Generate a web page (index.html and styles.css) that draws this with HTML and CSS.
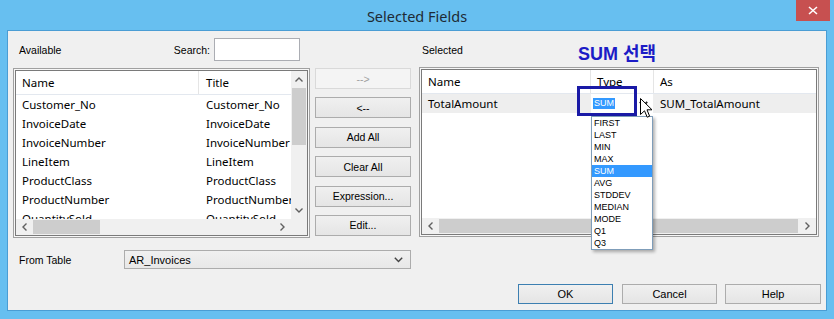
FILE: index.html
```html
<!DOCTYPE html>
<html>
<head>
<meta charset="utf-8">
<link rel="stylesheet" href="styles.css">
</head>
<body>
<div class="window">
  <div class="titlebar">
    <div class="title">Selected Fields</div>
    <div class="close"><svg width="10" height="9" viewBox="0 0 10 9"><path d="M1 1 L9 8 M9 1 L1 8" stroke="#fff" stroke-width="1.6"/></svg></div>
  </div>
  <div class="client">
    <div class="top">
      <div class="lhead">
        <span class="lbl avail">Available</span>
        <span class="lbl search-lbl">Search:</span>
        <div class="search"></div>
      </div>
      <div class="rhead">
        <span class="lbl selected">Selected</span>
        <span class="note">SUM 선택</span>
      </div>

      <div class="list llist">
        <div class="list-in lgrid">
          <div class="viewport">
            <div class="hdr lcols"><div class="hc">Name</div><div class="hc">Title</div></div>
            <div class="row lcols"><div>Customer_No</div><div>Customer_No</div></div>
            <div class="row lcols"><div>InvoiceDate</div><div>InvoiceDate</div></div>
            <div class="row lcols"><div>InvoiceNumber</div><div>InvoiceNumber</div></div>
            <div class="row lcols"><div>LineItem</div><div>LineItem</div></div>
            <div class="row lcols"><div>ProductClass</div><div>ProductClass</div></div>
            <div class="row lcols"><div>ProductNumber</div><div>ProductNumber</div></div>
            <div class="row lcols"><div>QuantitySold</div><div>QuantitySold</div></div>
          </div>
          <div class="vscroll">
            <div class="sbtn"><svg width="8" height="5" viewBox="0 0 8 5"><path d="M0.5 4.5 L4 1 L7.5 4.5" fill="none" stroke="#606060" stroke-width="1.4"/></svg></div>
            <div class="vtrack"><div class="vthumb"></div></div>
            <div class="sbtn"><svg width="8" height="5" viewBox="0 0 8 5"><path d="M0.5 0.5 L4 4 L7.5 0.5" fill="none" stroke="#606060" stroke-width="1.4"/></svg></div>
          </div>
          <div class="hscroll">
            <div class="sbtn hbtn"><svg width="5" height="8" viewBox="0 0 5 8"><path d="M4.5 0.5 L1 4 L4.5 7.5" fill="none" stroke="#606060" stroke-width="1.4"/></svg></div>
            <div class="htrack"><div class="hthumb lthumb"></div></div>
            <div class="sbtn hbtn"><svg width="5" height="8" viewBox="0 0 5 8"><path d="M0.5 0.5 L4 4 L0.5 7.5" fill="none" stroke="#606060" stroke-width="1.4"/></svg></div>
          </div>
          <div class="corner"></div>
        </div>
      </div>

      <div class="btncol">
        <div class="btn disabled">--&gt;</div>
        <div class="btn">&lt;--</div>
        <div class="btn">Add All</div>
        <div class="btn">Clear All</div>
        <div class="btn">Expression...</div>
        <div class="btn">Edit...</div>
      </div>

      <div class="rwrap">
        <div class="list rlist">
          <div class="list-in rgrid">
            <div class="viewport">
              <div class="hdr rcols"><div class="hc">Name</div><div class="hc">Type</div><div class="hc">As</div></div>
              <div class="row rcols selrow">
                <div>TotalAmount</div>
                <div class="combo"><span class="seltext">SUM</span><svg class="cchev" width="9" height="6" viewBox="0 0 9 6"><path d="M0.8 0.8 L4.5 4.8 L8.2 0.8" fill="none" stroke="#222" stroke-width="1.8"/></svg></div>
                <div>SUM_TotalAmount</div>
              </div>
            </div>
            <div class="hscroll">
              <div class="sbtn hbtn"><svg width="5" height="8" viewBox="0 0 5 8"><path d="M4.5 0.5 L1 4 L4.5 7.5" fill="none" stroke="#606060" stroke-width="1.4"/></svg></div>
              <div class="htrack"><div class="hthumb rthumb"></div></div>
              <div class="sbtn hbtn"><svg width="5" height="8" viewBox="0 0 5 8"><path d="M0.5 0.5 L4 4 L0.5 7.5" fill="none" stroke="#606060" stroke-width="1.4"/></svg></div>
            </div>
          </div>
        </div>
        <div class="annot"></div>
        <div class="dropdown">
          <div class="opt">FIRST</div>
          <div class="opt">LAST</div>
          <div class="opt">MIN</div>
          <div class="opt">MAX</div>
          <div class="opt hl">SUM</div>
          <div class="opt">AVG</div>
          <div class="opt">STDDEV</div>
          <div class="opt">MEDIAN</div>
          <div class="opt">MODE</div>
          <div class="opt">Q1</div>
          <div class="opt">Q3</div>
        </div>
        <svg class="cursor" width="14" height="21" viewBox="0 0 14 21"><path d="M0.5 0.5 L0.5 16.5 L4.5 12.8 L7.2 19.2 L9.6 18.2 L7 11.8 L12 11.8 Z" fill="#fff" stroke="#000" stroke-width="1" stroke-linejoin="miter"/></svg>
      </div>
    </div>

    <div class="fromrow">
      <span class="lbl fromlbl">From Table</span>
      <div class="ddl"><span>AR_Invoices</span><svg width="9" height="6" viewBox="0 0 9 6"><path d="M0.8 0.8 L4.5 4.6 L8.2 0.8" fill="none" stroke="#444" stroke-width="1.4"/></svg></div>
    </div>

    <div class="footer">
      <div class="btn fbtn ok">OK</div>
      <div class="btn fbtn">Cancel</div>
      <div class="btn fbtn help">Help</div>
    </div>
  </div>
</div>
</body>
</html>
```
FILE: styles.css
```css
* { box-sizing: border-box; }
html, body { margin: 0; padding: 0; }
body {
  width: 834px; height: 319px; overflow: hidden;
  background: #67bff0;
  font-family: "Liberation Sans", Arial, sans-serif;
  font-size: 10.5px; color: #000;
}
.window { width: 834px; height: 319px; background: #67bff0; display: flex; flex-direction: column; }
.titlebar { height: 30px; display: grid; grid-template-columns: 1fr auto 1fr; }
.title {
  grid-column: 2; font-family: "Noto Sans", sans-serif; font-size: 14.5px;
  color: #1e2b35; line-height: 30px; padding-top: 1px;
}
.close {
  grid-column: 3; justify-self: end; width: 34px; height: 21px; margin-right: 4px;
  background: #c75050; display: flex; align-items: center; justify-content: center;
}
.client {
  margin: 0 7px; height: 281px; border: 1px solid #4a9dd4; background: #f0f0f0;
  padding: 7px 5px 0 5px; display: flex; flex-direction: column;
}
.top {
  display: grid;
  grid-template-columns: 297px 5px 96px 8px 400px;
  grid-template-rows: 23px 171px;
  row-gap: 6px;
}
.lbl { font-size: 10.5px; }
.lhead { grid-column: 1; grid-row: 1; display: flex; align-items: center; }
.avail { padding-left: 6px; }
.search-lbl { margin-left: auto; margin-right: 4px; }
.search { width: 86px; height: 23px; border: 1px solid #abadb3; background: #fff; margin-right: 10px; }
.rhead { grid-column: 5; grid-row: 1; display: flex; align-items: center; }
.selected { padding-left: 3px; width: 159px; }
.note {
  font-family: "Liberation Sans", "Noto Sans CJK KR", sans-serif; font-weight: bold;
  font-size: 18px; line-height: 18px; color: #1c1cc6; padding-top: 8px;
}

.list { border: 1px solid #a0a0a0; padding: 1px; background: #f7f7f7; height: 170px; }
.llist { grid-column: 1; grid-row: 2; margin-top: 1px; }
.list-in { border: 1px solid #7a7a7a; background: #fff; height: 100%; overflow: hidden; display: grid; }
.lgrid { grid-template-columns: 275px 16px; grid-template-rows: 148px 16px; }
.rgrid { grid-template-columns: 394px; grid-template-rows: 148px 16px; }
.viewport { overflow: hidden; font-family: "Noto Sans", sans-serif; font-size: 11.5px; white-space: nowrap; }
.hdr { height: 24px; border-bottom: 1px solid #e3e8ef; line-height: 23px; }
.hc { border-right: 1px solid #e5e5e5; }
.hc:last-child { border-right: none; }
.row { height: 19px; line-height: 19px; }
.lcols { display: grid; grid-template-columns: 183px 1fr; }
.lcols > div:first-child { padding-left: 6px; }
.lcols > div:last-child { padding-left: 7px; overflow: hidden; }
.rcols { display: grid; grid-template-columns: 169px 63px 1fr; }
.rcols > div { padding-left: 6px; }
.rcols > div.combo { padding-left: 2px; }
.selrow { background: #eeeeee; }
.combo { background: #fff; display: flex; align-items: center; width: 62px; }
.seltext {
  font-family: "Liberation Sans", Arial, sans-serif; font-size: 9px; line-height: 11px;
  height: 11px; background: #3399ff; color: #fff; padding: 0 1px;
}
.cchev { margin-left: auto; margin-right: 5px; }

.vscroll { background: #f0f0f0; display: flex; flex-direction: column; }
.sbtn { height: 17px; display: flex; align-items: center; justify-content: center; flex: none; }
.vtrack { flex: 1; }
.vthumb { height: 57px; background: #cdcdcd; margin: 0 1px; }
.hscroll { background: #f0f0f0; display: flex; }
.hbtn { width: 17px; height: 16px; }
.htrack { flex: 1; display: flex; align-items: center; }
.hthumb { height: 14px; background: #cdcdcd; }
.lthumb { width: 67px; }
.rthumb { width: 359px; }
.corner { background: #f0f0f0; }

.btncol { grid-column: 3; grid-row: 2; display: flex; flex-direction: column; gap: 8.4px; padding-top: 1px; }
.btn {
  height: 21px; border: 1px solid #acacac;
  background: linear-gradient(#f0f0f0, #e5e5e5);
  display: flex; align-items: center; justify-content: center; font-size: 10.5px; color: #000;
}
.btn.disabled { border-color: #d9d9d9; background: #f4f4f4; color: #a0a0a0; }

.rwrap { grid-column: 5; grid-row: 2; position: relative; }
.rlist { height: 170px; }
.annot { position: absolute; left: 158px; top: 19px; width: 60px; height: 30px; border: 3px solid #1a1aa6; }
.dropdown {
  position: absolute; left: 172px; top: 49px; width: 62px; background: #fff;
  border: 1px solid #7f9db9; box-shadow: 2px 2px 3px rgba(0,0,0,0.3);
  font-family: "Liberation Sans", Arial, sans-serif; font-size: 9px;
}
.opt { height: 12px; line-height: 12px; padding-left: 2px; }
.opt.hl { background: #3399ff; color: #fff; }
.cursor { position: absolute; left: 221px; top: 31px; }

.fromrow { display: flex; align-items: center; margin-top: 12px; height: 19px; }
.fromlbl { width: 111px; padding-left: 6px; }
.ddl {
  width: 287px; height: 19px; border: 1px solid #acacac; background: linear-gradient(#f0f0f0, #e8e8e8);
  display: flex; align-items: center; padding: 0 7px 0 4px; justify-content: space-between;
  font-size: 11px;
}
.footer { display: flex; justify-content: flex-end; margin-top: 15px; gap: 9px; }
.fbtn { width: 95px; height: 20px; font-size: 11px; }
.help { width: 96px; margin-left: -1px; }
.ok { border-color: #3c7fb1; }
```
